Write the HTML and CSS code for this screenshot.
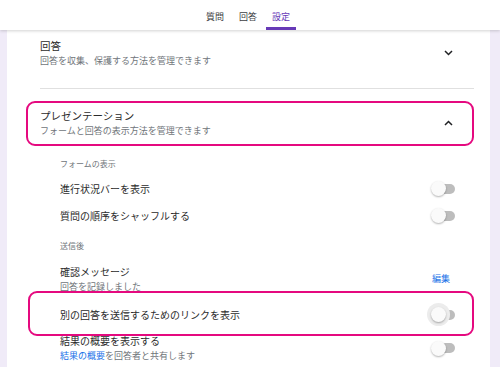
FILE: index.html
```html
<!DOCTYPE html>
<html lang="ja">
<head>
<meta charset="utf-8">
<title>設定</title>
<link rel="stylesheet" href="styles.css">
</head>
<body>
<header class="topbar">
  <nav class="tabs">
    <span class="tab">質問</span>
    <span class="tab">回答</span>
    <span class="tab tab-active">設定</span>
  </nav>
</header>
<main class="card">
  <section class="sec">
    <div class="sec-head">
      <div class="sec-text">
        <div class="sec-title">回答</div>
        <div class="sec-sub">回答を収集、保護する方法を管理できます</div>
      </div>
      <svg class="chev" width="9" height="6" viewBox="0 0 9 6"><path d="M1 1l3.5 3.5L8 1" fill="none" stroke="#202124" stroke-width="1.5"/></svg>
    </div>
  </section>
  <hr class="divider">
  <section class="sec sec-open">
    <div class="sec-head sec-head-mark">
      <div class="sec-text">
        <div class="sec-title">プレゼンテーション</div>
        <div class="sec-sub">フォームと回答の表示方法を管理できます</div>
      </div>
      <svg class="chev" width="9" height="6" viewBox="0 0 9 6"><path d="M1 5l3.5-3.5L8 5" fill="none" stroke="#202124" stroke-width="1.5"/></svg>
    </div>
    <div class="items">
      <div class="group-label group-first">フォームの表示</div>
      <div class="row">
        <span class="row-title">進行状況バーを表示</span>
        <span class="toggle"></span>
      </div>
      <div class="row">
        <span class="row-title">質問の順序をシャッフルする</span>
        <span class="toggle"></span>
      </div>
      <div class="group-label group-next">送信後</div>
      <div class="row row-multi row-confirm">
        <div class="row-text">
          <div class="row-title">確認メッセージ</div>
          <div class="row-sub">回答を記録しました</div>
        </div>
        <span class="edit">編集</span>
      </div>
      <div class="row row-mark">
        <span class="row-title">別の回答を送信するためのリンクを表示</span>
        <span class="toggle toggle-focus"></span>
      </div>
      <div class="row row-multi row-summary">
        <div class="row-text">
          <div class="row-title">結果の概要を表示する</div>
          <div class="row-sub"><span class="link">結果の概要</span>を回答者と共有します</div>
        </div>
        <span class="toggle"></span>
      </div>
    </div>
  </section>
</main>
</body>
</html>
```
FILE: styles.css
```css
html, body {
  margin: 0;
  padding: 0;
}
body {
  width: 500px;
  height: 367px;
  overflow: hidden;
  background: #f0ebf8;
  font-family: "Noto Sans CJK JP", "Noto Sans", sans-serif;
  color: #202124;
}
.topbar {
  position: relative;
  z-index: 2;
  height: 30px;
  background: #fff;
  box-shadow: 0 1px 3px rgba(0, 0, 0, 0.18);
  display: flex;
  justify-content: center;
  padding-right: 4px;
  box-sizing: border-box;
}
.tabs {
  display: flex;
  gap: 3px;
}
.tab {
  box-sizing: border-box;
  height: 30px;
  padding: 12px 6px 0;
  font-size: 9px;
  line-height: 10px;
  color: #3c4043;
  border-bottom: 3px solid transparent;
}
.tab-active {
  color: #673ab7;
  border-bottom-color: #673ab7;
}
.card {
  display: block;
  margin: 0 10px 0 7px;
  height: 337px;
  background: #fff;
  padding: 9px 16px 0 33px;
  box-sizing: border-box;
}
.sec-head {
  display: flex;
  align-items: center;
  justify-content: space-between;
  position: relative;
}
.sec-head-mark::after {
  content: "";
  position: absolute;
  left: -14px;
  right: 0;
  top: -8px;
  bottom: -9px;
  border: 2px solid #e5097f;
  border-radius: 9px;
}
.sec-title {
  font-size: 10.5px;
  line-height: 14px;
  color: #2b2b2b;
}
.sec-sub {
  margin-top: 2px;
  font-size: 9px;
  line-height: 12px;
  color: #70757a;
}
.chev {
  display: block;
  margin-right: 21px;
}
.divider {
  border: 0;
  border-top: 1px solid #e0e0e0;
  margin: 21px 0 20px;
  height: 0;
}
.items {
  padding-left: 20px;
}
.group-label {
  font-size: 8px;
  line-height: 12px;
  color: #70757a;
}
.group-first {
  margin-top: 21px;
  margin-bottom: 5px;
}
.group-next {
  margin-top: 11px;
  margin-bottom: 13px;
}
.row {
  display: flex;
  align-items: center;
  justify-content: space-between;
  height: 27px;
  position: relative;
}
.row-multi {
  height: auto;
}
.row-mark {
  margin-top: 8px;
}
.row-mark::after {
  content: "";
  position: absolute;
  left: -32px;
  right: 0;
  top: -10px;
  bottom: -8px;
  border: 2px solid #e5097f;
  border-radius: 9px;
}
.row-summary {
  margin-top: 6px;
}
.row-title {
  font-size: 10px;
  line-height: 14px;
  color: #2b2b2b;
}
.row-sub {
  margin-top: 2px;
  font-size: 9px;
  line-height: 12px;
  color: #70757a;
}
.link {
  color: #1a73e8;
}
.edit {
  font-size: 9px;
  line-height: 12px;
  color: #1a73e8;
  margin-right: 24px;
}
.toggle {
  position: relative;
  display: block;
  width: 21px;
  height: 10px;
  border-radius: 5px;
  background: #bdbdbd;
  margin-right: 19px;
}
.toggle::before {
  content: "";
  position: absolute;
  left: -3px;
  top: -2.5px;
  width: 15px;
  height: 15px;
  border-radius: 50%;
  background: #fafafa;
  box-shadow: 0 1px 2px rgba(0, 0, 0, 0.3);
}
.toggle-focus::before {
  box-shadow: 0 1px 2px rgba(0, 0, 0, 0.3), 0 0 0 4px #ececec;
}
```
